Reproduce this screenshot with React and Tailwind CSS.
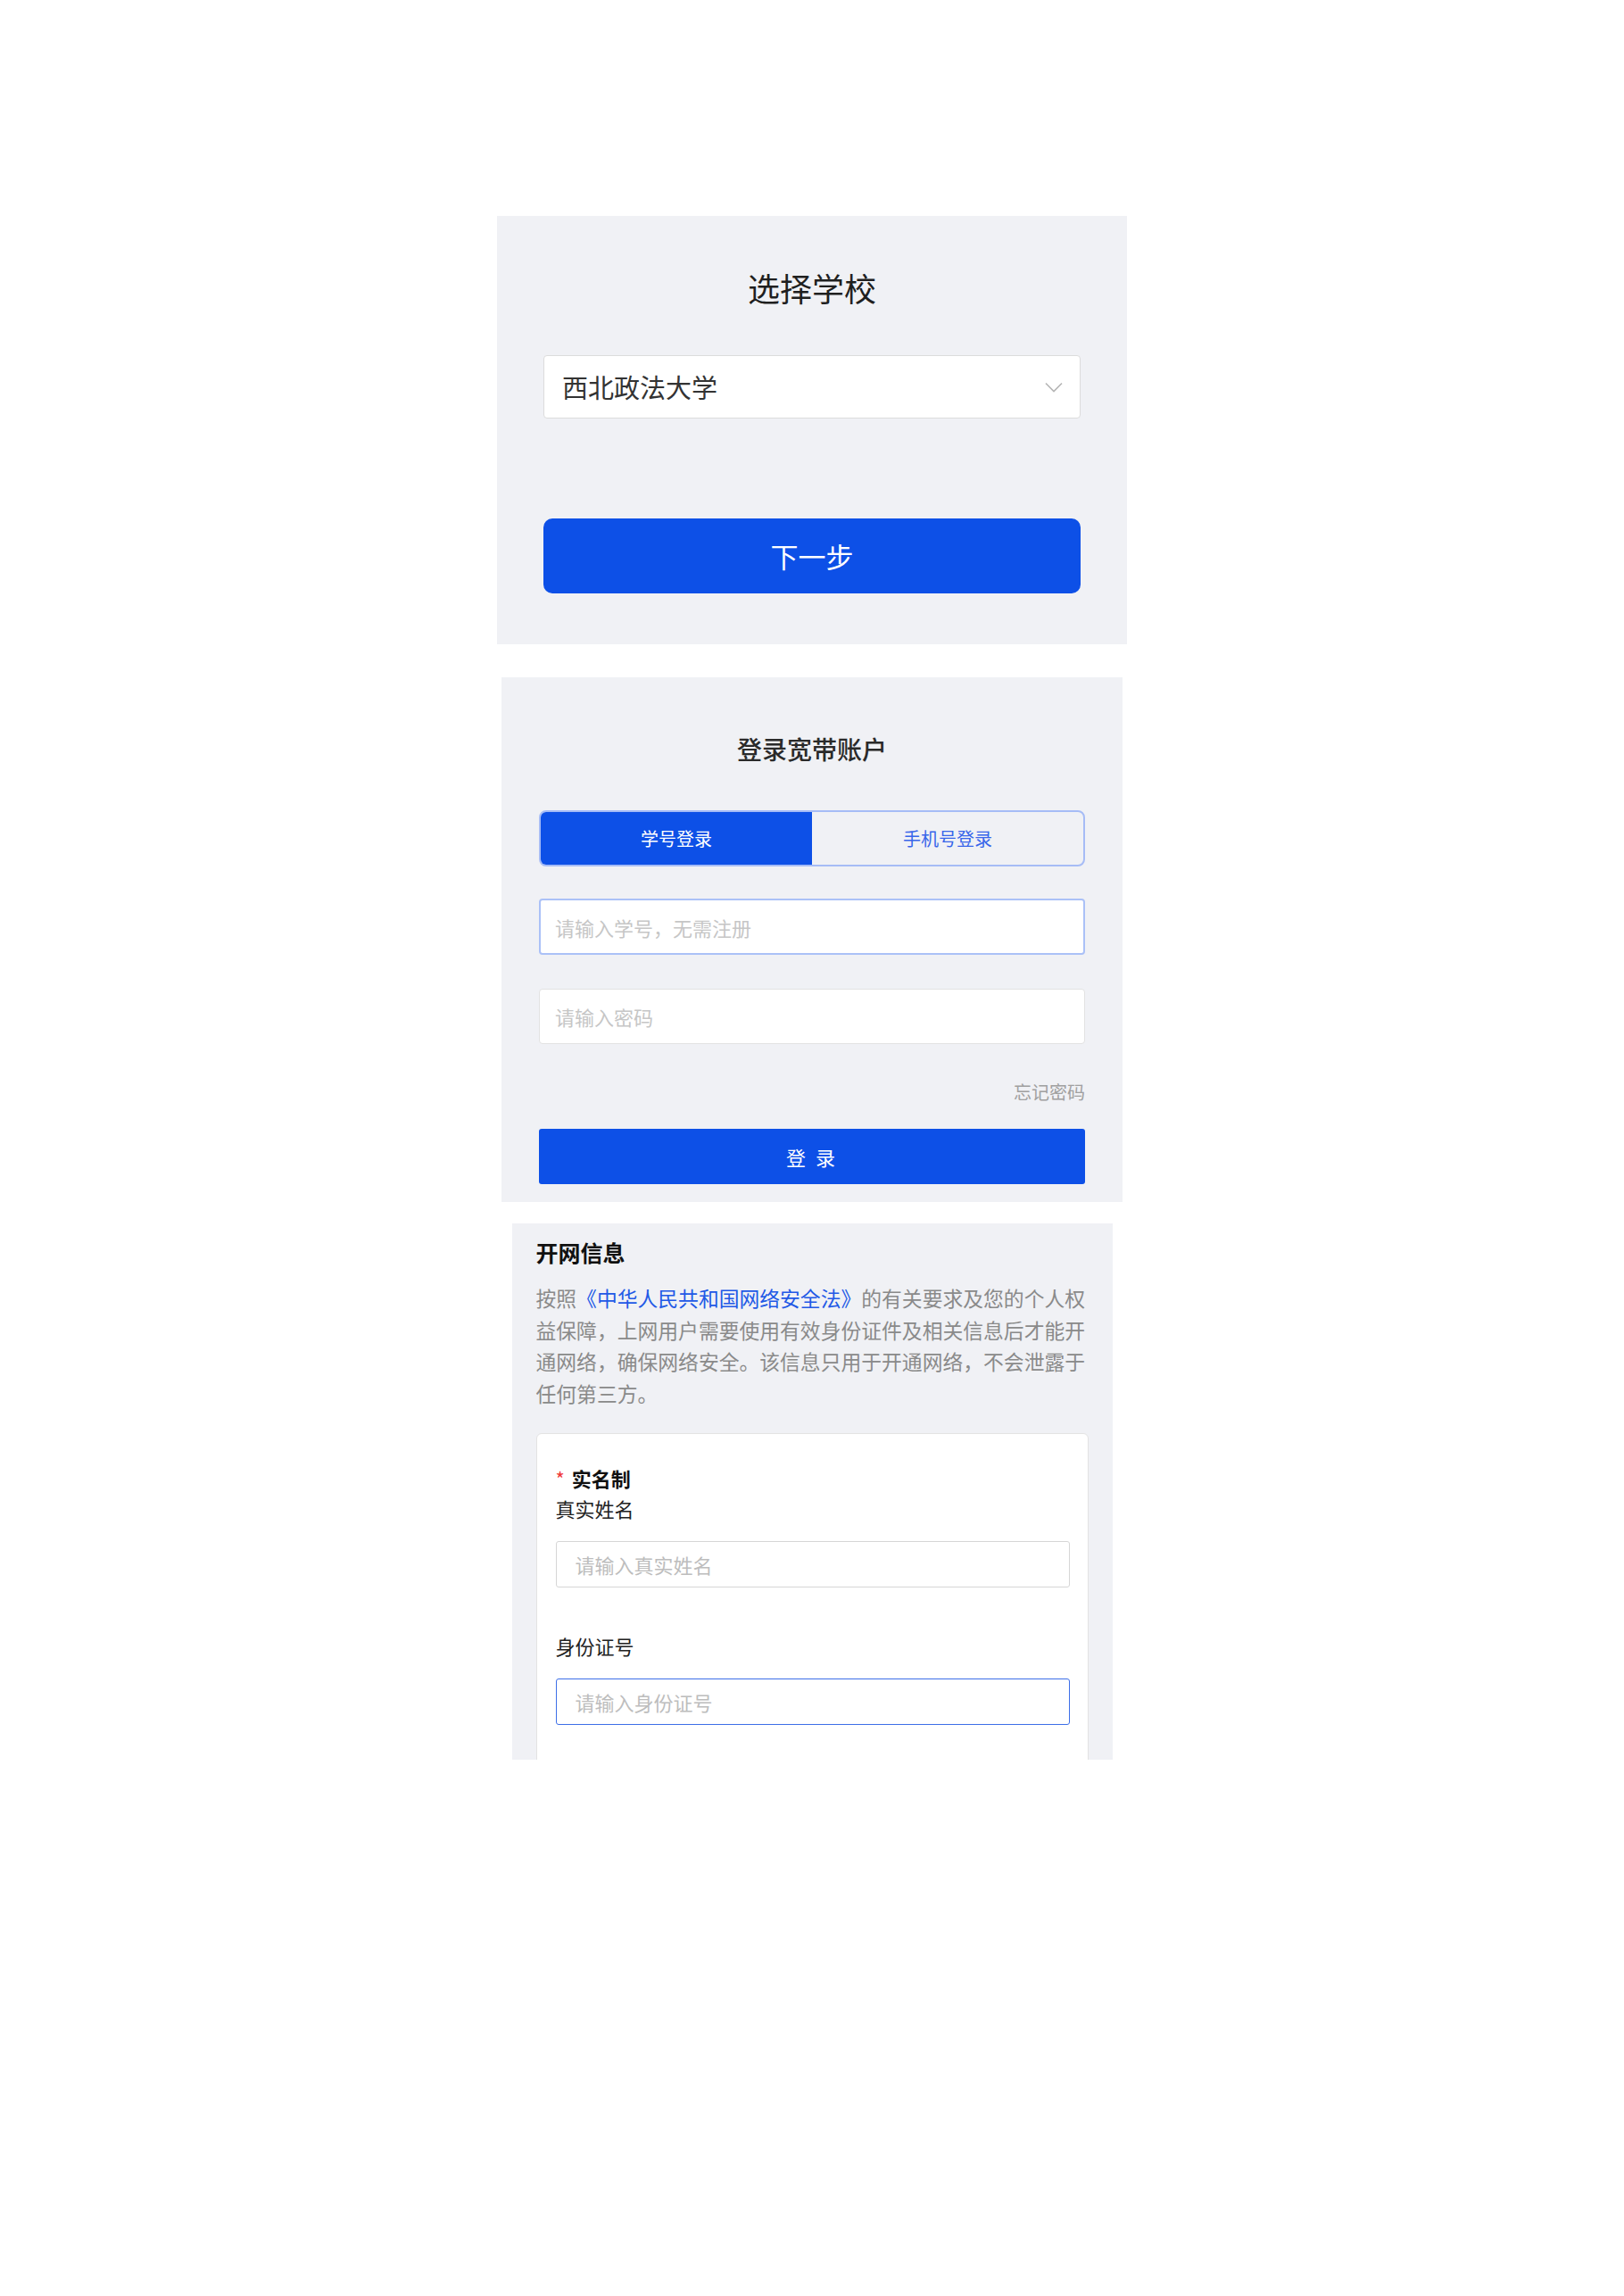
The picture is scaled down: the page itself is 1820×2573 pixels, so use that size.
import React from 'react';

const font = { fontFamily: '"Noto Sans CJK SC", "Noto Sans", sans-serif' };

const ChevronDown = () => (
  <svg width="20" height="12" viewBox="0 0 20 12" fill="none">
    <path d="M1 1.5 L10 10.5 L19 1.5" stroke="#b5b5b5" strokeWidth="1.6" />
  </svg>
);

const SchoolPanel = () => (
  <div className="w-[706px] mx-auto bg-[#f0f1f5] pt-[58px] pb-[57px] px-[52px]">
    <h1 className="text-center text-[36px] leading-[44px] text-[#1f1f1f]">选择学校</h1>
    <div className="mt-[54px] h-[71px] bg-white border border-[#dcdcdc] rounded-[4px] flex items-center justify-between pl-[20px] pr-[19px]">
      <span className="text-[29px] text-[#333]">西北政法大学</span>
      <ChevronDown />
    </div>
    <button className="mt-[112px] w-full h-[84px] bg-[#0d50e7] rounded-[10px] text-white text-[31px]">
      下一步
    </button>
  </div>
);

const LoginPanel = () => (
  <div className="w-[696px] mx-auto bg-[#f0f1f5] pt-[62px] pb-[20px] px-[42px]">
    <h2 className="text-center text-[28px] leading-[36px] font-medium text-[#2a2a2a]">登录宽带账户</h2>
    <div className="mt-[51px] h-[63px] flex border-2 border-[#a6bcf6] rounded-[8px] overflow-hidden">
      <div className="flex-1 bg-[#0d50e7] flex items-center justify-center text-white text-[20px]">学号登录</div>
      <div className="flex-1 flex items-center justify-center text-[#3866ea] text-[20px]">手机号登录</div>
    </div>
    <input
      className="mt-[36px] block w-full h-[63px] bg-white border-2 border-[#abc1f7] rounded-[4px] pl-[16px] text-[22px] outline-none placeholder:text-[#c6c6c6]"
      placeholder="请输入学号，无需注册"
    />
    <input
      className="mt-[38px] block w-full h-[62px] bg-white border border-[#e2e2e2] rounded-[4px] pl-[17px] text-[22px] outline-none placeholder:text-[#c6c6c6]"
      placeholder="请输入密码"
    />
    <div className="mt-[40px] text-right text-[20px] leading-[28px] text-[#a0a0a0]">忘记密码</div>
    <button className="mt-[27px] w-full h-[62px] bg-[#0d50e7] rounded-[3px] text-white text-[22px] tracking-[3px]">
      登 录
    </button>
  </div>
);

const InfoPanel = () => (
  <div className="w-[673px] mx-auto h-[601px] overflow-hidden bg-[#f0f1f5] pt-[16px] px-[27px]">
    <h3 className="text-[25px] leading-[32px] font-bold text-[#111]">开网信息</h3>
    <p className="mt-[18px] w-[620px] text-[22.8px] leading-[35.5px] text-[#8a8a8a]">
      按照<span className="text-[#2259e6]">《中华人民共和国网络安全法》</span>的有关要求及您的个人权益保障，上网用户需要使用有效身份证件及相关信息后才能开通网络，确保网络安全。该信息只用于开通网络，不会泄露于任何第三方。
    </p>
    <div className="mt-[27px] bg-white border border-[#e3e3e3] rounded-[6px] pt-[32px] pb-[80px] pl-[21px] pr-[20px]">
      <div className="text-[22px] leading-[34px] text-[#111] font-bold flex items-center">
        <span className="text-[#f03a3a] font-normal mr-[8px]">*</span>实名制
      </div>
      <div className="text-[22px] leading-[34px] text-[#222]">真实姓名</div>
      <input
        className="mt-[20px] block w-full h-[52px] border border-[#d6d6d6] rounded-[3px] pl-[21px] text-[22px] outline-none placeholder:text-[#bdbdbd]"
        placeholder="请输入真实姓名"
      />
      <div className="mt-[48px] text-[22px] leading-[34px] text-[#222]">身份证号</div>
      <input
        className="mt-[20px] block w-full h-[52px] border border-[#3d6fe8] rounded-[3px] pl-[21px] text-[22px] outline-none placeholder:text-[#bdbdbd]"
        placeholder="请输入身份证号"
      />
    </div>
  </div>
);

const App = () => {
  return (
    <div className="min-h-screen bg-white pt-[242px] pb-[200px]" style={font}>
      <SchoolPanel />
      <div className="h-[37px]" />
      <LoginPanel />
      <div className="h-[24px]" />
      <InfoPanel />
    </div>
  );
};

export default App;
